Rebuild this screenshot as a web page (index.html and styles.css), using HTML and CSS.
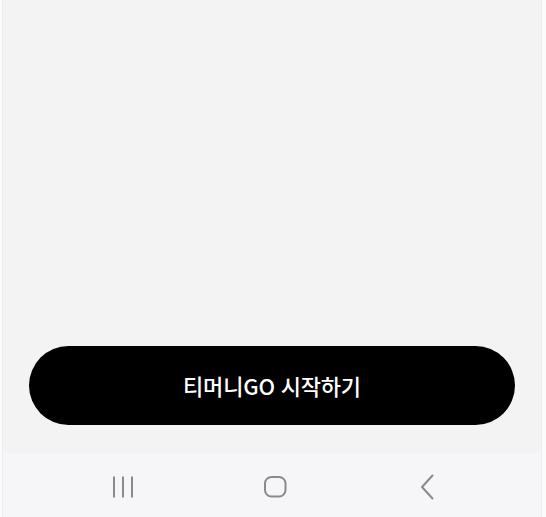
FILE: index.html
```html
<!DOCTYPE html>
<html lang="ko">
<head>
<meta charset="utf-8">
<title>티머니GO</title>
<link rel="stylesheet" href="styles.css">
</head>
<body>
<div class="screen">
  <main class="content">
    <button class="start-btn" type="button">티머니GO 시작하기</button>
  </main>
  <nav class="navbar">
    <span class="nav-item">
      <svg width="24" height="24" viewBox="0 0 24 24" aria-hidden="true">
        <path d="M3 1.5V22.5M12 1.5V22.5M21 1.5V22.5" stroke="#8a8a8a" stroke-width="2" fill="none"/>
      </svg>
    </span>
    <span class="nav-item">
      <svg width="24" height="24" viewBox="0 0 24 24" aria-hidden="true">
        <rect x="2" y="2" width="20.5" height="19.5" rx="6.5" stroke="#8a8a8a" stroke-width="2" fill="none"/>
      </svg>
    </span>
    <span class="nav-item">
      <svg width="24" height="28" viewBox="0 0 24 28" aria-hidden="true">
        <path d="M17.5 2.5L7 14L17.5 25.5" stroke="#8a8a8a" stroke-width="2" fill="none" stroke-linecap="round" stroke-linejoin="round"/>
      </svg>
    </span>
  </nav>
</div>
</body>
</html>
```
FILE: styles.css
```css
html, body {
  margin: 0;
  padding: 0;
}
body {
  width: 546px;
  height: 517px;
  background: #fbfbfb;
  overflow: hidden;
  font-family: "Noto Sans CJK KR", "Noto Sans", sans-serif;
}
.screen {
  margin-left: 2px;
  width: 538px;
  height: 517px;
  border-left: 1px solid #ececec;
  border-right: 1px solid #ececec;
  display: flex;
  flex-direction: column;
}
.content {
  flex: 1;
  background: #f3f3f3;
  display: flex;
  flex-direction: column;
  justify-content: flex-end;
  padding: 0 26px 28px;
}
.start-btn {
  height: 79px;
  border: none;
  border-radius: 40px;
  background: #000;
  color: #fff;
  font-family: "Noto Sans CJK KR", "Noto Sans", sans-serif;
  font-size: 22px;
  font-weight: 500;
  letter-spacing: -0.2px;
  padding: 0 0 2px;
}
.navbar {
  height: 64px;
  background: #f6f6f8;
  display: grid;
  grid-template-columns: repeat(3, 152px);
  justify-content: center;
  align-items: center;
  padding: 4px 0 0 5px;
  box-sizing: border-box;
}
.nav-item {
  display: flex;
  justify-content: center;
  align-items: center;
}
.nav-item svg {
  display: block;
}
```
